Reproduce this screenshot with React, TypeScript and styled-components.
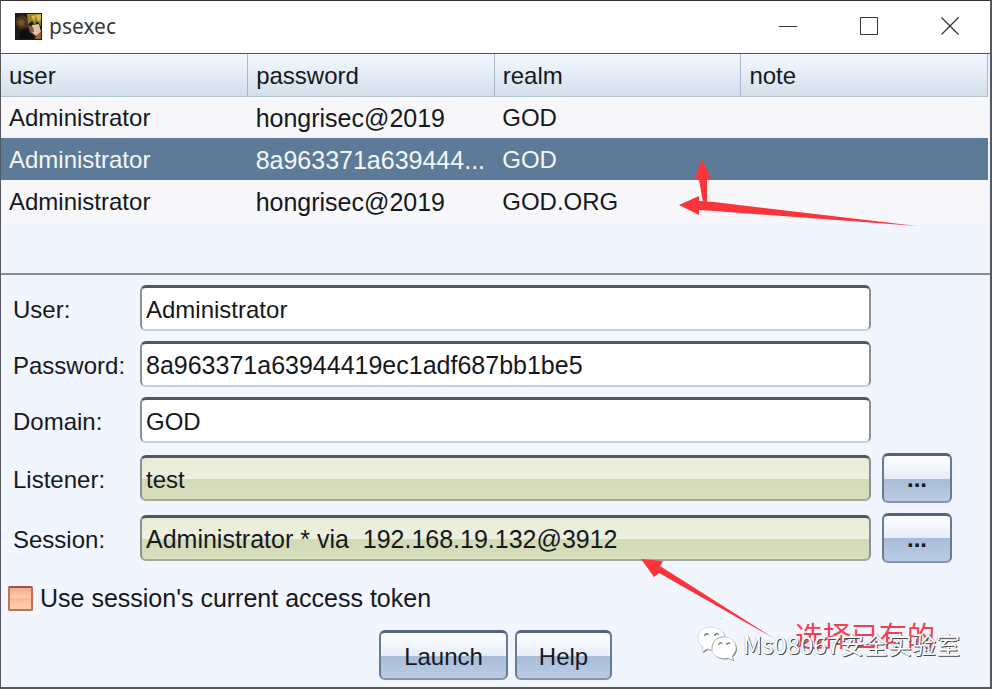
import React from 'react';
import styled, { createGlobalStyle, css } from 'styled-components';

const GlobalStyle = createGlobalStyle`
  *, *::before, *::after { box-sizing: border-box; }
  html, body, #root { height: 100%; }
  body {
    margin: 0;
    background: #f1f5fe;
    color: #15181d;
    font: 24px/28px "Liberation Sans", Arial, sans-serif;
  }
  button, input { font: inherit; color: inherit; margin: 0; }
`;

const Window = styled.div`
  position: relative;
  display: flex;
  flex-direction: column;
  min-height: 100%;
  border: 1px solid #55595f;
  border-top-color: #3b2f35;
  border-right-width: 2px;
  border-bottom-width: 2px;
  background: #f1f5fe;
`;

const TitleBar = styled.header`
  display: flex;
  align-items: center;
  height: 52px;
  background: #ffffff;
  padding: 0 0 2px 14px;
`;

const Title = styled.h1`
  flex: 1;
  margin: 0 0 0 7px;
  font: 400 21px/28px "Noto Sans", sans-serif;
  color: #3a3a3a;
`;

const CaptionButton = styled.button`
  display: flex;
  align-items: center;
  justify-content: center;
  width: 81px;
  height: 50px;
  padding: 0;
  border: 0;
  background: transparent;
`;

const TableArea = styled.section`
  height: 222px;
  padding-right: 2px;
  border-top: 1px solid #50565c;
  border-bottom: 2px solid #868b95;
`;

const Table = styled.table`
  width: 100%;
  table-layout: fixed;
  border-collapse: collapse;
`;

const HeadCell = styled.th`
  height: 42px;
  padding: 2px 8px 0;
  text-align: left;
  font-weight: 400;
  background: linear-gradient(#f2f7fd, #e4edf7 45%, #d4dfeb);
  border-right: 1px solid #a9b8c8;
  border-bottom: 1px solid #b4c2d0;
`;

const Row = styled.tr<{ $selected?: boolean }>`
  background: ${(p) => (p.$selected ? '#5d7b98' : '#f7f7f9')};
  color: ${(p) => (p.$selected ? '#f4f7fa' : 'inherit')};
`;

const Cell = styled.td<{ $large?: boolean }>`
  height: 42px;
  padding: 2px 4px 0 8px;
  font-size: ${(p) => (p.$large ? 25 : 24)}px;
  white-space: nowrap;
`;

const Form = styled.form`
  display: flex;
  flex-direction: column;
  padding: 10px 38px 0 12px;
`;

const Field = styled.div<{ $tall?: boolean }>`
  display: grid;
  grid-template-columns: 116px 1fr 70px;
  column-gap: 11px;
  align-items: center;
  height: ${(p) => (p.$tall ? 50 : 46)}px;
  margin-bottom: 10px;
`;

const Label = styled.label`
  padding-top: 3px;
  white-space: nowrap;
`;

const TextBox = styled.input<{ $large?: boolean }>`
  width: 100%;
  height: 46px;
  padding: 2px 4px 0;
  font-size: ${(p) => (p.$large ? 25 : 24)}px;
  outline: 0;
  border: 2px solid #8b9093;
  border-top: 3px solid #53595b;
  border-bottom-color: #c9ccd2;
  border-radius: 6px;
  background: #ffffff;
  &:read-only {
    border-bottom-color: #a5a9a0;
    background: linear-gradient(#e8ecd7, #edf0df 50%, #d3dab6 50%, #d9dfbd);
  }
`;

const glossy = css`
  border: 2px solid #687b96;
  border-top: 3px solid #56647a;
  border-bottom-color: #8493ab;
  border-radius: 6px;
  background: linear-gradient(#ffffff, #e6edf7 50%, #a9bcd7 50%, #bacce5);
`;

const BrowseButton = styled.button`
  ${glossy}
  height: 50px;
  padding: 0;
  font-weight: 700;
`;

const ActionButton = styled.button<{ $wide?: boolean }>`
  ${glossy}
  width: ${(p) => (p.$wide ? 129 : 97)}px;
  height: 50px;
  padding: 2px 0 0;
`;

const CheckRow = styled.label`
  display: flex;
  align-items: center;
  gap: 7px;
  height: 28px;
  padding-left: 7px;
  margin-top: 11px;
  font-size: 25px;
`;

const CheckBox = styled.input`
  appearance: none;
  width: 25px;
  height: 25px;
  border: 2px solid #bd7355;
  border-top-color: #9c533b;
  border-radius: 2px;
  background: linear-gradient(#f7a988, #fdd0b6 50%, #fab896 50%, #ffd2ae);
`;

const Actions = styled.footer`
  display: flex;
  justify-content: center;
  gap: 7px;
  margin-top: 18px;
`;

const Arrows = styled.svg`
  position: absolute;
  top: 156px;
  right: 71px;
  width: 240px;
  height: 76px;
  pointer-events: none;
`;

const SessionArrow = styled.svg`
  position: absolute;
  right: 211px;
  bottom: 44px;
  width: 138px;
  height: 86px;
  pointer-events: none;
`;

const Annotation = styled.span`
  position: absolute;
  right: 55px;
  bottom: 32px;
  font: 28px/40px "Noto Sans CJK SC", sans-serif;
  color: #f23f4e;
`;

const Watermark = styled.div`
  position: absolute;
  right: 30px;
  bottom: 23px;
  display: flex;
  align-items: center;
  gap: 6px;
  font: 24px/40px "Noto Sans CJK SC", sans-serif;
  color: #ffffff;
  text-shadow: 1px 1px 0 #4a4a4a, 0 0 1px #8a8a8a;
`;

const Avatar = () => (
  <svg width="27" height="27" viewBox="0 0 27 27" aria-hidden="true">
    <rect width="27" height="27" fill="#211b16" />
    <path d="M1 5l7-3 7 5-2 7-8 2-4-4z" fill="#49361c" />
    <path d="M3 8l4-2 3 3-2 4-4-1z" fill="#76552a" />
    <path d="M12 1h14v12l-4-5-2 4-3-4-4 3z" fill="#9a8222" />
    <path d="M16 3l3 5 2-6 2 7 3-3V1z" fill="#dcb94b" />
    <path d="M17 12l7-1 2 8-5 4-5-4z" fill="#dfc3a8" />
    <path d="M13 12l5 2 1 5-4 1z" fill="#7d5c42" />
    <path d="M5 19l8-3 6 10H4z" fill="#100f10" />
    <path d="M21 23l5-4v7h-6z" fill="#a3622c" />
  </svg>
);

const WeChat = () => (
  <svg width="40" height="36" viewBox="0 0 40 36" aria-hidden="true">
    <g fill="#6d7177" transform="translate(1 1)">
      <path d="M14 1C6 1 1 6 1 12c0 4 2 7 5 9l-1 5 5-3c11 3 18-3 18-11C28 6 22 1 14 1z" />
      <path d="M27 11c-7 0-12 5-12 11 0 7 7 12 16 10l5 2-1-4c8-7 3-19-8-19z" />
    </g>
    <g fill="#ffffff" stroke="#c6cad0" strokeWidth="0.6">
      <path d="M14 1C6 1 1 6 1 12c0 4 2 7 5 9l-1 5 5-3c11 3 18-3 18-11C28 6 22 1 14 1z" />
      <path d="M27 11c-7 0-12 5-12 11 0 7 7 12 16 10l5 2-1-4c8-7 3-19-8-19z" />
    </g>
    <g fill="none" stroke="#65696d" strokeWidth="1.2">
      <path d="M8 10a1.7 1.7 0 0 1 3.4-1M18 10a1.7 1.7 0 0 1 3.4-1M22 19a1.5 1.5 0 0 1 3-1M30 19a1.5 1.5 0 0 1 3-1" />
      <path d="M15 23C15 15 20 11 27 11" stroke="#9a9ea3" strokeWidth="0.8" />
    </g>
  </svg>
);

const credentials = [
  { user: 'Administrator', password: 'hongrisec@2019', realm: 'GOD' },
  { user: 'Administrator', password: '8a963371a639444...', realm: 'GOD', selected: true },
  { user: 'Administrator', password: 'hongrisec@2019', realm: 'GOD.ORG' },
];

const fields = [
  { id: 'user', label: 'User:', value: 'Administrator' },
  { id: 'password', label: 'Password:', value: '8a963371a63944419ec1adf687bb1be5', large: true },
  { id: 'domain', label: 'Domain:', value: 'GOD' },
  { id: 'listener', label: 'Listener:', value: 'test', browse: true },
  { id: 'session', label: 'Session:', value: 'Administrator * via  192.168.19.132@3912', browse: true, large: true },
];

export default function App() {
  return (
    <>
      <GlobalStyle />
      <Window>
        <TitleBar>
          <Avatar />
          <Title>psexec</Title>
          <CaptionButton aria-label="Minimize">
            <svg width="18" height="18" fill="none" stroke="#333"><path d="M0 9.5h18" /></svg>
          </CaptionButton>
          <CaptionButton aria-label="Maximize">
            <svg width="18" height="18" fill="none" stroke="#333"><path d="M.5 .5h17v17H.5z" /></svg>
          </CaptionButton>
          <CaptionButton aria-label="Close">
            <svg width="18" height="18" fill="none" stroke="#333" strokeWidth="1.2"><path d="M.5 .5l17 17M17.5 .5l-17 17" /></svg>
          </CaptionButton>
        </TitleBar>
        <TableArea>
          <Table>
            <thead>
              <tr>
                {['user', 'password', 'realm', 'note'].map((name) => <HeadCell key={name}>{name}</HeadCell>)}
              </tr>
            </thead>
            <tbody>
              {credentials.map((c) => (
                <Row key={c.realm + c.password} $selected={c.selected}>
                  <Cell>{c.user}</Cell>
                  <Cell $large>{c.password}</Cell>
                  <Cell>{c.realm}</Cell>
                  <Cell />
                </Row>
              ))}
            </tbody>
          </Table>
        </TableArea>
        <Form onSubmit={(e) => e.preventDefault()}>
          {fields.map((f) => (
            <Field key={f.id} $tall={f.browse}>
              <Label htmlFor={f.id}>{f.label}</Label>
              <TextBox id={f.id} defaultValue={f.value} readOnly={f.browse} $large={f.large} />
              {f.browse && <BrowseButton type="button" aria-label={`Choose ${f.id}`}>...</BrowseButton>}
            </Field>
          ))}
        </Form>
        <CheckRow>
          <CheckBox type="checkbox" />
          Use session's current access token
        </CheckRow>
        <Actions>
          <ActionButton type="button" $wide>Launch</ActionButton>
          <ActionButton type="button">Help</ActionButton>
        </Actions>
        <Arrows viewBox="0 0 240 76" fill="#f9343a" aria-hidden="true">
          <path d="M23 2l9 20h-4v24l-4-1-4-22h-5z" />
          <path d="M0 48l20-9v5l15 1 203 24-203-15-15-1v5z" />
        </Arrows>
        <SessionArrow viewBox="0 0 138 86" fill="#f9343a" aria-hidden="true">
          <path d="M0 2l22 2-3 5 115 73L18 16l-5 4z" />
        </SessionArrow>
        <Annotation>选择已有的</Annotation>
        <Watermark><WeChat />Ms08067安全实验室</Watermark>
      </Window>
    </>
  );
}
